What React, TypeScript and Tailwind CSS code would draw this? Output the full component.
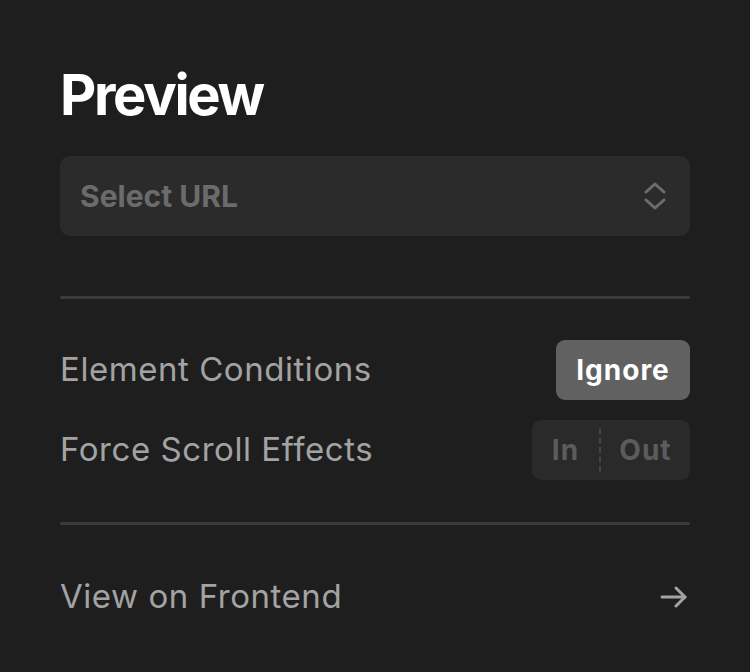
import React from "react";

export default function App() {
  return (
    <div
      className="w-[750px] h-[672px] bg-[#1e1e1e] px-[60px] pt-[62px] flex flex-col"
      style={{ fontFamily: 'Inter, "Liberation Sans", sans-serif' }}
    >
      <h1 className="text-[56px] leading-[66px] font-bold text-white tracking-[-2.3px]">Preview</h1>
      <div className="mt-[28px] h-[80px] rounded-[10px] bg-[#2b2b2b] flex items-center justify-between pl-[20px] pr-[24px]">
        <span className="text-[30px] font-bold text-[#6b6b6b]">Select URL</span>
        <svg width="22" height="28" viewBox="0 0 22 28" fill="none" stroke="#6e6e6e" strokeWidth="3" strokeLinecap="round" strokeLinejoin="round">
          <path d="M2 10 L11 2 L20 10" />
          <path d="M2 18 L11 26 L20 18" />
        </svg>
      </div>
      <div className="mt-[60px] h-[3px] rounded-full bg-[#3a3a3a]" />
      <div className="mt-[41px] flex items-center justify-between h-[60px]">
        <span className="text-[33px] tracking-[0.55px] text-[#a3a3a3]">Element Conditions</span>
        <button className="h-[60px] w-[134px] rounded-[9px] bg-[#616161] text-white text-[28px] tracking-[1px] font-bold">Ignore</button>
      </div>
      <div className="mt-[20px] flex items-center justify-between h-[60px]">
        <span className="text-[33px] tracking-[0.55px] text-[#a3a3a3]">Force Scroll Effects</span>
        <div className="h-[60px] w-[158px] rounded-[9px] bg-[#2a2a2a] flex items-center">
          <span className="w-[67px] text-center text-[28px] tracking-[1px] font-bold text-[#5c5c5c]">In</span>
          <div className="h-[44px] border-l-2 border-dashed border-[#444444]" />
          <span className="flex-1 text-center text-[28px] tracking-[1px] font-bold text-[#5c5c5c]">Out</span>
        </div>
      </div>
      <div className="mt-[42px] h-[3px] rounded-full bg-[#3a3a3a]" />
      <div className="mt-[50px] flex items-center justify-between h-[44px]">
        <span className="text-[33px] tracking-[0.55px] text-[#a3a3a3]">View on Frontend</span>
        <svg width="28" height="22" viewBox="0 0 28 22" fill="none" stroke="#a3a3a3" strokeWidth="3" strokeLinecap="round" strokeLinejoin="round" className="mr-[2px]">
          <path d="M2 11 H25" />
          <path d="M16 2 L25 11 L16 20" />
        </svg>
      </div>
    </div>
  );
}
